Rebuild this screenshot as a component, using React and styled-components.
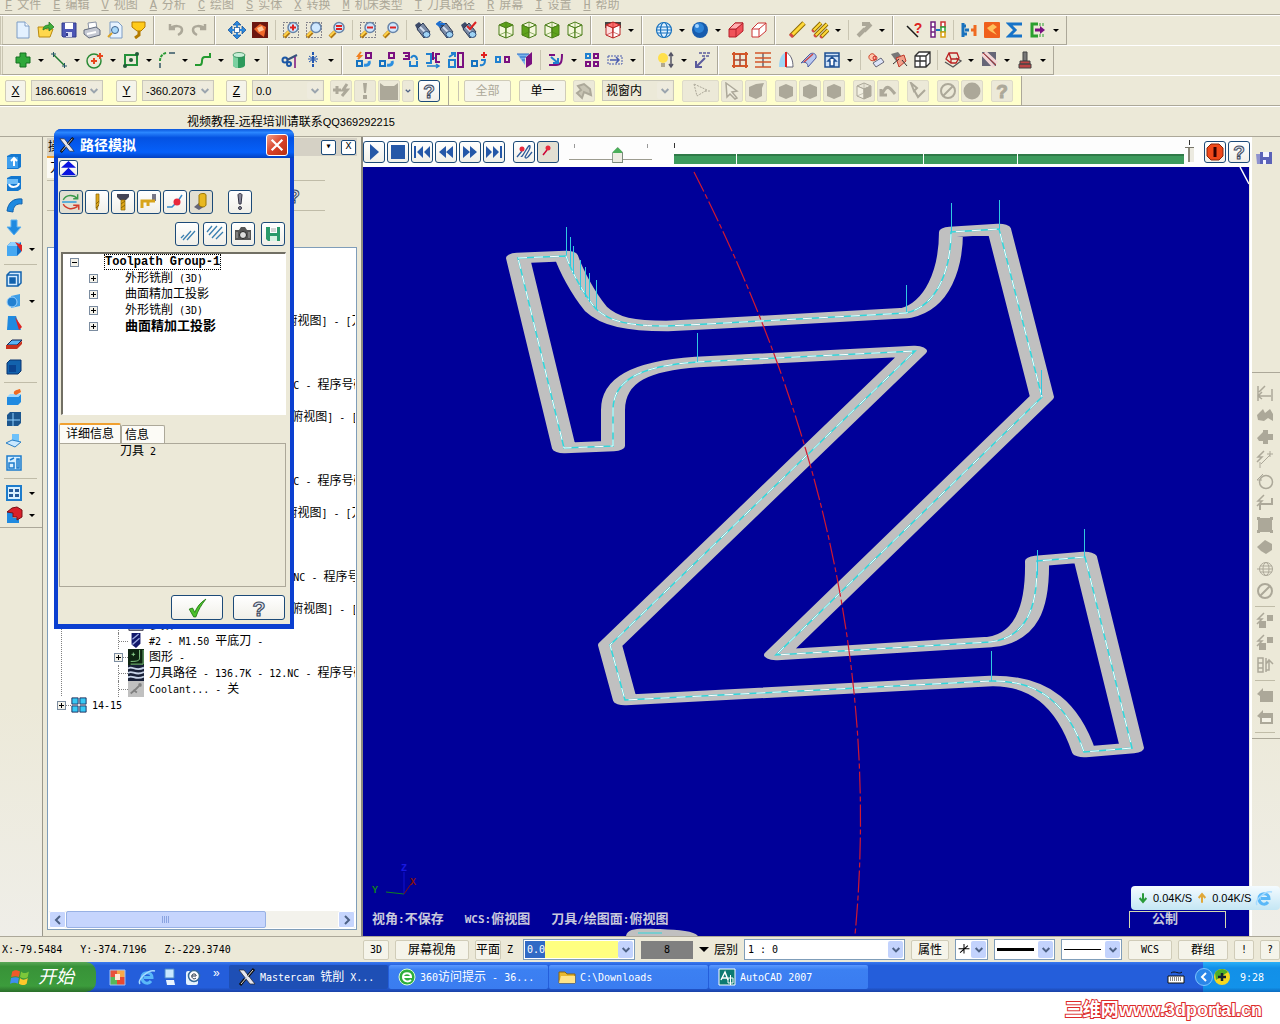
import React from "react";
import styled, {createGlobalStyle, css} from "styled-components";

const GlobalStyle = createGlobalStyle`
  * {
    box-sizing: border-box;
  }

  body {
    margin: 0;
    background: #fff;
    color: #000;
    font-family: "Liberation Sans", "Noto Sans CJK SC", sans-serif;
    font-size: 12px;
    line-height: 16px;
  }

  button, input, select {
    font: inherit;
    color: inherit;
    margin: 0;
    padding: 0;
    border-radius: 0;
    min-width: 0;
  }
`

const AXIS = "#1a1a1a";
const GREY = "#aca899";
const BLUE = "#1f8ae0";

/* ---------- icons, all on an 18 x 18 grid ---------- */

const cube = (top, left, right, line) => (
    <g stroke={line} strokeWidth="1" strokeLinejoin="round">
        <path d="M9 1 16 4 9 7 2 4Z" fill={top}/>
        <path d="M2 4 9 7V17L2 14Z" fill={left}/>
        <path d="M9 7 16 4V14L9 17Z" fill={right}/>
        <path d="M2 14 9 11 16 14M9 1V11" fill="none" strokeOpacity=".6"/>
    </g>
);

const lens = (color, sign, frame) => (
    <g>
        {frame && <rect x="1.5" y="1.5" width="15" height="15" fill="none" stroke="#224" strokeDasharray="1 2"/>}
        <path d="M2 16 7 11" stroke="#b07810" strokeWidth="4"/>
        <path d="M2 15 7 10" stroke="#ffd24a" strokeWidth="2"/>
        <circle cx="11" cy="6.500" r="5" fill="#cfe8ff" stroke="#6884a8" strokeWidth="1.500"/>
        <path d={sign} stroke={color} strokeWidth="2" fill="none"/>
    </g>
);

const scope = extra => (
    <g>
        <path d="M2 4 6 1 10 5 5 10Z" fill="#3c4a68"/>
        <path d="M4 8 10 2 17 11 11 17Z" fill="#7a8aa5" stroke="#2c3a55"/>
        <path d="M7 6 14 13" stroke="#d4e0f0" strokeWidth="2"/>
        <ellipse cx="13.500" cy="13.500" rx="3.500" ry="3" fill="#9fd3f5" stroke="#2c4a75"/>
        {extra}
    </g>
);

const magnet = extra => (
    <g>
        <path d="M2 10H7V15H2Z" fill="none" stroke="#1673c0" strokeWidth="2"/>
        <path d="M11 2H16V7H11Z" fill="none" stroke="#7a1080" strokeWidth="2"/>
        <path d="M9 14C13 15 15 13 14 10" fill="none" stroke="#2a8fe0" strokeWidth="3"/>
        {extra}
    </g>
);

const help = (fill, line) => (
    <text x="9" y="16" textAnchor="middle" fontSize="19" fontWeight="bold" fontFamily="Liberation Sans, sans-serif"
          fill={fill} stroke={line} strokeWidth="1">?</text>
);

const block = extra => (
    <g>
        <path d="M2 6 6 2H16V12L12 16H2Z" fill="#0f6cc4"/>
        <path d="M2 6H12V16H2Z" fill="#45a8f2"/>
        <path d="M2 6 6 2H16L12 6Z" fill="#8fd0ff"/>
        {extra}
    </g>
);

const greyBolt = <path d="M8 1 2 7H6L1 12" fill="none" stroke={GREY} strokeWidth="1.500"/>;
const ban = <g fill="none" stroke={GREY} strokeWidth="2"><circle cx="9" cy="9" r="7"/><path d="M4 14 14 4"/></g>;

const icons = {
    page: <g><path d="M3 1H11L15 5V17H3Z" fill="#e3f1ff" stroke="#7d9cc4"/><path d="M11 1V5H15" fill="#fff" stroke="#7d9cc4"/></g>,
    open: <g><path d="M1 6H7L9 8H16L13 16H2Z" fill="#ffd84d" stroke="#b98a10"/><path d="M6 9C6 5 9 4 12 4V1L17 6 12 10V7C9 7 8 8 6 9Z" fill="#3fae3a" stroke="#1b6e20" strokeWidth=".7"/></g>,
    save: <g><path d="M2 2H16V16H3L2 15Z" fill="#4d57b5" stroke="#333c8d"/><path d="M5 2H13V8H5Z" fill="#fff"/><path d="M6 11H12V16H6Z" fill="#d9dcf5"/><path d="M7 12V15" stroke="#333c8d" strokeWidth="2"/></g>,
    print: <g><path d="M5 2 13 1 14 8 6 9Z" fill="#fff" stroke="#8a93a5"/><path d="M1 9 13 6 17 9V14L6 17 1 13Z" fill="#c4c8d2" stroke="#626b7c"/><path d="M4 13 13 11" stroke="#fff" strokeWidth="2"/></g>,
    preview: <g><path d="M4 1H12L16 5V17H4Z" fill="#e7f3ff" stroke="#7d9cc4"/><circle cx="9" cy="9" r="3.500" fill="#a8d8fa" stroke="#41648d"/><path d="M6 12 2 16" stroke="#d9a326" strokeWidth="2"/></g>,
    cup: <g><path d="M3 1H16V6L12 10H8L3 6Z" fill="#ffcb1a" stroke="#b37b00"/><path d="M10 10V14L6 17" stroke="#b37b00" strokeWidth="3" fill="none"/></g>,
    undo: <path d="M3 8C7 4 15 4 15 9 15 12 13 13 11 14M3 3V8H8" fill="none" stroke={GREY} strokeWidth="2.500"/>,
    redo: <path d="M15 8C11 4 3 4 3 9 3 12 5 13 7 14M15 3V8H10" fill="none" stroke={GREY} strokeWidth="2.500"/>,
    fit: <g fill="#2b87dc" stroke="#124e95" strokeWidth=".7"><path d="M9 0 13 4H5ZM9 18 13 14H5ZM0 9 4 5V13ZM18 9 14 5V13Z"/><path d="M8 3H10V8H15V10H10V15H8V10H3V8H8Z" stroke="none"/><rect x="6.500" y="6.500" width="5" height="5" fill="#fff"/></g>,
    redraw: <g><rect x="1" y="1" width="16" height="16" fill="#6d1710"/><path d="M3 8 9 3 15 6 13 16 7 12Z" fill="#f0682a"/><path d="M6 7 11 5 13 9 8 11Z" fill="#ffc89b"/></g>,
    zoomWin: lens("#d22", "M8 6.500H14M11 3.500V9.500", true),
    zoomTarget: lens("none", "", true),
    zoomIn: lens("#d22", "M8 5H14M8 8H14", false),
    zoomOut: lens("#d22", "M8 6.500H14", true),
    zoomOut2: lens("#d22", "M8 6.500H14", false),
    scope: scope(null),
    scopeArrow: scope(<path d="M9 3H2M5 0 1 3 5 6" fill="none" stroke="#1d6fd0" strokeWidth="2"/>),
    scopeCheck: scope(<path d="M8 5 11 8 17 1" fill="none" stroke="#d22" strokeWidth="2"/>),
    cubeTop: cube("#5fa31c", "#f4f7dc", "#f4f7dc", "#4a7d18"),
    cubeFront: cube("#f4f7dc", "#5fa31c", "#f4f7dc", "#4a7d18"),
    cubeRight: cube("#f4f7dc", "#f4f7dc", "#5fa31c", "#4a7d18"),
    cubeIso: cube("#f4f7dc", "#f4f7dc", "#f4f7dc", "#4a7d18"),
    cubePlane: <g><path d="M1 1H17V7H1Z" fill="#444"/>{cube("#ff6f6f", "#ffdede", "#fff", "#b22")}</g>,
    globe: <g fill="none" stroke="#1771bd" strokeWidth="1.200"><circle cx="9" cy="9" r="7.500" fill="#dff1ff"/><ellipse cx="9" cy="9" rx="3.500" ry="7.500"/><path d="M2 6H16M1 9H17M2 12H16"/></g>,
    ball: <g><circle cx="9" cy="9" r="8" fill="#175cae"/><circle cx="8" cy="7" r="5" fill="#2c83d8"/><circle cx="6" cy="5" r="2" fill="#a6d5ff"/></g>,
    redBlock: <g stroke="#b5202a" strokeWidth="1"><path d="M2 8 8 2H16V10L9 16H2Z" fill="#f0525a"/><path d="M2 8H9V16M9 8 16 2" fill="none"/><path d="M2 8 8 2H16L9 8Z" fill="#ffaeb0"/></g>,
    wireBlock: <g stroke="#c33" fill="#fff"><path d="M2 8 8 2H16V10L9 16H2Z"/><path d="M2 8H9V16M9 8 16 2" fill="none"/></g>,
    eraser: <g><path d="M3 15 16 2" stroke="#8e6a00" strokeWidth="5"/><path d="M3 15 16 2" stroke="#ffd93a" strokeWidth="3"/><path d="M2 13 5 16" stroke="#d54747" strokeWidth="3"/></g>,
    erasers: <g><path d="M2 10 10 2M4 15 16 3M10 16 17 9" stroke="#8e6a00" strokeWidth="4"/><path d="M2 10 10 2M4 15 16 3M10 16 17 9" stroke="#ffd93a" strokeWidth="2"/><path d="M1 9 3 11M3 14 5 16M9 15 11 17" stroke="#d54747" strokeWidth="2"/></g>,
    eraserOff: <path d="M3 15 10 8M9 10 16 3M7 3H15" stroke={GREY} strokeWidth="4"/>,
    analyze: <g><path d="M1 5 12 16" stroke={AXIS} strokeWidth="1.500"/><text x="12" y="12" textAnchor="middle" fontSize="14" fontWeight="bold" fontFamily="Liberation Sans" fill="#d22">?</text></g>,
    chain: <g fill="#fff" strokeWidth="1.500"><path d="M2 1H6V6H2ZM2 6H6V11H2ZM2 11H6V16H2Z" stroke="#702080"/><path d="M12 1H16V6H12Z" stroke="#c33"/><path d="M12 6H16V11H12Z" stroke="#29a13a"/><path d="M12 11H16V16H12Z" stroke="#d8a010"/><path d="M7 9H11" stroke="#1771bd" strokeWidth="2"/></g>,
    merge: <g fill="none" strokeWidth="3"><path d="M3 2V16M3 5H6M3 13H7M5 9H9" stroke="#1771bd"/><path d="M15 4V15M11 9H15" stroke="#ef6a20"/></g>,
    orange: <g><rect x="1" y="1" width="16" height="16" rx="1" fill="#f0601c"/><path d="M4 7 10 3 14 6 10 9 14 14 7 10Z" fill="#ffc05c"/></g>,
    sigma: <path d="M16 3H3L9 9 3 15H16" fill="none" stroke="#1673c8" strokeWidth="3"/>,
    exportIcon: <g fill="none"><path d="M9 3H3V15H9" stroke="#2ba02f" strokeWidth="3"/><path d="M11 2V5M14 2V5M11 13V16M14 13V16" stroke="#2ba02f"/><path d="M6 9H12" stroke="#7a1080" strokeWidth="3"/><path d="M11 5 16 9 11 13Z" fill="#7a1080"/></g>,

    plus: <path d="M6 2H12V6H16V12H12V16H6V12H2V6H6Z" fill="#2fa83a" stroke="#157020"/>,
    line: <g stroke="#1f7a30" fill="none"><path d="M4 4 14 14" strokeWidth="1.500"/><path d="M1 3H6M3.500 1V6M12 15H17M14.500 12V17" stroke="#256"/></g>,
    circle: <g><circle cx="8" cy="10" r="7" fill="none" stroke="#2a8a35" strokeWidth="1.500"/><path d="M8 7V13M5 10H11M14 2V8M11 5H17" stroke="#e8451c" strokeWidth="2"/></g>,
    rect: <g><path d="M3 4H15V14H3Z" fill="none" stroke="#24913a" strokeWidth="2"/><g fill="#235a3a"><circle cx="15" cy="3" r="2"/><circle cx="3" cy="15" r="2"/><circle cx="9" cy="9" r="2"/></g></g>,
    fillet: <g fill="none"><path d="M2 17V12" stroke="#356" strokeWidth="1.500"/><path d="M2 10C2 5 5 2 9 2" stroke="#2a9a35" strokeWidth="2" strokeDasharray="3 1"/><path d="M11 2H17" stroke="#356" strokeWidth="1.500"/></g>,
    spline: <path d="M1 14H6C8 14 8 12 8 10 8 7 9 6 11 6H16V2" fill="none" stroke="#239a2f" strokeWidth="2"/>,
    cylinder: <g><path d="M3 4V14C3 18 15 18 15 14V4" fill="#2c9a5c"/><path d="M3 4V14C3 16 6 17 8 17V6" fill="#7bd0a0"/><ellipse cx="9" cy="4" rx="6" ry="2.500" fill="#c6efd6" stroke="#207a48" strokeWidth=".7"/></g>,
    trim: <g fill="none"><circle cx="4" cy="9" r="2.500" stroke="#1b57a5" strokeWidth="2"/><circle cx="8" cy="13" r="2" stroke="#1b57a5" strokeWidth="2"/><path d="M6 9 16 4" stroke="#37517c" strokeWidth="2"/><path d="M14 6V17" stroke="#7a1080" strokeWidth="1.500"/></g>,
    breakIcon: <g stroke="#2458b0" strokeWidth="2"><path d="M9 1V17" strokeDasharray="3 1"/><path d="M5 5 13 11M13 5 5 11M4 8H14" strokeWidth="1"/></g>,
    x1: magnet(<path d="M6 1 3 5H6L3 8" fill="none" stroke="#f08020" strokeWidth="2"/>),
    x2: magnet(null),
    x3: <g fill="none" strokeWidth="2"><path d="M2 2H8V8H2M8 5H4" stroke="#7a1080"/><path d="M9 10V15H16V10M10 7C12 3 16 5 16 9" stroke="#1f80d0"/></g>,
    x4: <g fill="none" strokeWidth="2"><path d="M2 3H7V12H2M11 7H8" stroke="#1f80d0"/><path d="M16 3H12V11H16M9 1V9" stroke="#7a1080"/><path d="M3 15H15M12 13 15 15 12 17" stroke="#1f80d0" strokeWidth="1.500"/></g>,
    x5: <g fill="none" strokeWidth="2"><path d="M2 9H8V16H2Z" stroke="#1f80d0"/><path d="M11 2H16V16H11Z" stroke="#7a1080"/><path d="M2 6 8 2M4 2H8V6" stroke="#1f80d0"/></g>,
    x6: <g fill="none" strokeWidth="2"><path d="M2 10H7V15H2Z" stroke="#1673c0"/><path d="M10 14C14 15 15 12 15 9H11" stroke="#1f80d0"/><path d="M14 1V7M11 4H17" stroke="#e02020"/></g>,
    x7: <g fill="none" strokeWidth="2"><path d="M3 6H7V11H3Z" stroke="#1f80d0"/><path d="M12 6H16V11H12Z" stroke="#7a1080"/></g>,
    x8: <g><path d="M10 6 16 1V13L10 17Z" fill="#7a1080"/><path d="M1 3H13L9 7V14Z" fill="#7ab4ec"/><path d="M1 3H13M4 6H10M6 9H9" stroke="#2a6cc8"/></g>,
    roll: <g fill="none" strokeWidth="2"><path d="M2 4H8M2 14H9C14 14 15 11 15 3" stroke="#7a1080"/><path d="M4 6 11 12M11 7V12H6" stroke="#1f80d0"/></g>,
    grid4: <g fill="none" stroke="#7a1080" strokeWidth="2"><path d="M3 3H7V7H3Z" stroke="#1f80d0"/><path d="M11 3H15V7H11ZM3 11H7V15H3ZM11 11H15V15H11Z"/></g>,
    stretch: <g fill="none" stroke="#4a5cb0"><path d="M2 5H16V13H2Z" strokeDasharray="2 1"/><path d="M4 9H13M10 6 13 9 10 12" strokeWidth="1.500"/></g>,
    bulb: <g><circle cx="6" cy="7" r="5" fill="#ffe04a"/><path d="M4 12H8V16H4Z" fill="#b0a890"/><path d="M14 3V15M12 5 14 2 16 5M12 13 14 16 16 13" stroke="#556" strokeWidth="1.500" fill="none"/></g>,
    level: <g fill="none" stroke="#5b5b9c" strokeWidth="1.500"><path d="M6 2H17M9 5H17" strokeDasharray="3 1"/><path d="M12 7 4 15M3 10V16H9" strokeWidth="2"/></g>,
    mesh: <g fill="none" stroke="#d2562a" strokeWidth="2"><path d="M3 1V17M15 1V17M1 3H17M1 15H17"/><path d="M9 3V15M3 9H15" stroke="#a04a3a" strokeWidth="1.500"/></g>,
    ladder: <g strokeWidth="1.500"><path d="M9 2V16" stroke="#667"/><path d="M1 2H17M1 7H17M1 11H17M1 16H17" stroke="#d2562a"/></g>,
    fan: <g><path d="M2 16C2 7 5 3 9 1V16Z" fill="#9fd6f4"/><path d="M9 1C14 4 16 9 16 16H9Z" fill="#fff" stroke="#667"/><path d="M9 1V16" stroke="#d22" strokeWidth="2"/></g>,
    tube: <g><path d="M1 12 10 3C13 1 17 3 16 7L8 16C8 12 5 10 1 12Z" fill="#b8c8f0" stroke="#4a5aa0"/><path d="M4 11 13 3" stroke="#c44" strokeWidth="1.500"/></g>,
    boxUp: <g fill="#cfe2f8" stroke="#1d4f92" strokeWidth="1.500"><path d="M2 2H16V16H2Z"/><path d="M2 5H16"/><path d="M9 6 13 10H11V15H7V10H5Z" fill="#fff"/></g>,
    blob1: <g><path d="M2 5C5 0 10 4 8 9 6 11 1 9 2 5Z" fill="#ffc8ad" stroke="#d0482e"/><path d="M6 12 14 7 17 11 9 16Z" fill="#dde4f8" stroke="#667"/><circle cx="8" cy="7" r="2" fill="none" stroke="#c22"/></g>,
    blob2: <g><path d="M1 3 8 1 12 6 6 10Z" fill="#777"/><path d="M6 7 14 4 16 10 9 16Z" fill="#f0a08a" stroke="#c0392b"/><path d="M3 13 9 8M12 9 17 15" stroke="#333"/></g>,
    wireCube: <g fill="none" stroke="#333" strokeWidth="1.300"><path d="M2 5 6 1H17V12L13 16H2ZM2 5H13V16M13 5 17 1M7 5V16M2 10H13" fill="#fff"/></g>,
    net1: <g fill="none" stroke="#b22" strokeWidth="1.300"><path d="M1 11 9 16 17 10 12 7" stroke="#555"/><path d="M2 8 5 2H13L15 7 12 12H7ZM5 2 7 8H15M7 8V12"/></g>,
    net2: <g><path d="M2 1H16V15H2Z" fill="#667"/><path d="M2 3 14 16M5 1 17 12" stroke="#f3d6d6" strokeWidth="3"/><path d="M3 2 16 14" stroke="#b33"/></g>,
    post: <g fill="#b44" stroke="#444"><path d="M7 1H11V10H7Z" fill="#777"/><path d="M4 10H14V13H4ZM3 13H15V17H3Z"/></g>,

    fastPoint: <path d="M1 8H9M5 4V12M15 2 11 8H15L10 14" fill="none" stroke={GREY} strokeWidth="3"/>,
    bang: <path d="M7 1H11L10 11H8ZM7 13H11V17H7Z" fill={GREY}/>,
    monster: <path d="M0 1 4 4H14L18 1V18H0Z" fill={GREY}/>,
    help: help("#dde3ec", "#3d4a5e"),
    helpOff: help(GREY, GREY),
    scribble: <path d="M3 4 9 2 15 7 16 13 9 10 7 16 2 11 6 8Z" fill="#c8c4b4" stroke={GREY} strokeWidth="2"/>,
    lasso: <path d="M2 2 5 14 15 8ZM13 9H18" fill="none" stroke={GREY} strokeDasharray="2 1"/>,
    cursor: <path d="M3 1 14 9 9 10 14 16 12 17 7 12 4 15Z" fill="#f0eee0" stroke={GREY} strokeWidth="1.500"/>,
    hexCheck: <path d="M2 5 9 2 17 1 15 6V14L9 17 2 14Z" fill={GREY}/>,
    hex: <path d="M2 5 9 2 16 5V14L9 17 2 14Z" fill={GREY}/>,
    cubeOff: cube("#e8e5d6", "#f2f0e2", GREY, GREY),
    arcOff: <path d="M2 13 6 7C9 3 12 7 16 12M2 7V13H8" fill="none" stroke={GREY} strokeWidth="3"/>,
    checkOff: <path d="M2 1 8 6 5 9ZM5 8 9 15 16 8" fill="none" stroke={GREY} strokeWidth="2"/>,
    ban,
    disc: <circle cx="9" cy="9" r="8.500" fill={GREY}/>,

    l1: <g><path d="M2 4 6 2H16V15L13 17H2Z" fill="#1478d0"/><path d="M2 5H13V16H2Z" fill="#3f9fee"/><path d="M9 6V14M6 9 9 6 12 9" fill="none" stroke="#fff" strokeWidth="2"/></g>,
    l2: <g><path d="M2 4 6 2H16V15L13 17H2Z" fill="#1478d0"/><path d="M2 5H13V10H2Z" fill="#6dbcf8"/><path d="M4 10C5 14 13 14 14 9" fill="none" stroke="#fff" strokeWidth="2"/></g>,
    l3: <path d="M2 15C3 7 8 2 17 3V8C11 7 8 11 8 16Z" fill={BLUE} stroke="#1262ad"/>,
    l4: <path d="M6 2H12V9H16L9 17 2 9H6Z" fill={BLUE} stroke="#5bb0f0"/>,
    l5: block(<path d="M10 2 17 5V12L14 8Z" fill="#d22"/>),
    l6: <g fill="none" stroke="#1262ad" strokeWidth="1.500"><path d="M2 5 5 2H16V13L13 16H2ZM2 5H13V16" fill="#d5ecff"/><path d="M5 8H10V13H5Z" fill="#1262ad"/></g>,
    l7: <g><path d="M6 4 15 2V14L6 16Z" fill="#3f9ee8"/><circle cx="7" cy="10" r="5" fill="#2380d0" stroke="#9cd2ff"/></g>,
    l8: <g><path d="M3 2H11L16 16H2Z" fill={BLUE}/><path d="M10 3 17 13 14 16Z" fill="#d22"/></g>,
    l9: <g><path d="M2 9 7 4H17L12 9Z" fill="#5ab4f5" stroke="#125"/><path d="M1 9H12L17 5V8L12 13H1Z" fill="#c8321e"/></g>,
    l10: <g><path d="M2 5 5 2H16V13L13 16H2Z" fill="#1262ad" stroke="#0a3570"/><path d="M4 7H11V14H4Z" fill="#0a4390"/></g>,
    l11: <g><path d="M2 9H13L16 6V14L13 17H2Z" fill={BLUE}/><path d="M2 9 5 6H16L13 9Z" fill="#9cd7ff"/><path d="M9 6C8 2 12 2 15 1L16 4 11 7Z" fill="#f06a20"/></g>,
    l12: <g><path d="M2 5 5 2H16V13L13 16H2Z" fill="#1c568e"/><path d="M2 10H15M8 3V16" stroke="#8fd0ff"/></g>,
    l13: <g><path d="M7 2H14V10L7 11Z" fill="#6dc1fa"/><path d="M1 11 7 8 16 10 10 15Z" fill="#c9e8ff" stroke="#2a7fc4"/></g>,
    l14: <g fill="#d8efff" stroke="#1d7ccc" strokeWidth="1.500"><path d="M2 2H16V16H2Z"/><path d="M4 9H9V14H4ZM12 5H14V14H12ZM5 6 9 4"/></g>,
    l15: <g><path d="M2 2H16V16H2Z" fill="#d8efff" stroke="#1d7ccc" strokeWidth="2"/><path d="M4 5H8V8H4ZM10 5H14V8H10ZM4 10H8V13H4ZM10 10H14V13H10Z" fill="#245a9a"/></g>,
    l16: <g><path d="M2 5H8V12H14V17H2Z" fill={BLUE}/><path d="M2 6 7 2 12 1 17 4V11L12 14V11L8 11V7Z" fill="#d8202a" stroke="#7a1015"/></g>,

    floppies: <g><path d="M1 5H8V15H2Z" fill="#8e92cf"/><path d="M5 3H17V15H5Z" fill="#5b62b8"/><path d="M8 3H14V8H8Z" fill="#f4f4ff"/><path d="M8 11H11V15H8Z" fill="#f4f4ff"/></g>,
    r1: <g fill="none" stroke={GREY} strokeWidth="1.500"><path d="M2 2V17M16 5V17M2 12H15M6 8 2 12 6 15M9 2 3 8"/></g>,
    r2: <path d="M1 9 7 3 9 7 14 3 17 8V15L12 12 8 15 2 14Z" fill={GREY}/>,
    r3: <path d="M1 10 7 4V2H12V6H17V12H12V16H7V13H3Z" fill={GREY}/>,
    r4: <g>{greyBolt}<path d="M5 14 14 5M14 1V7M11 4H17M4 12V18" stroke={GREY} fill="none"/></g>,
    r5: <g><circle cx="10" cy="10" r="6.500" fill="none" stroke={GREY} strokeWidth="1.500"/><path d="M7 2 1 8H6" fill="none" stroke={GREY}/></g>,
    r6: <g>{greyBolt}<path d="M4 16V10H16V4" stroke={GREY} fill="none" strokeWidth="2"/></g>,
    r7: <path d="M2 2H16V16H2ZM1 1H4V4H1ZM14 1H17V4H14ZM1 14H4V17H1ZM14 14H17V17H14Z" fill={GREY}/>,
    r8: <path d="M1 9 9 2 16 6V12L10 16 5 13Z" fill={GREY}/>,
    r9: <g fill="none" stroke={GREY}><circle cx="10" cy="9" r="6.500"/><ellipse cx="10" cy="9" rx="3" ry="6.500"/><path d="M1 9H17M4 6H16M4 12H16"/></g>,
    r11: <g>{greyBolt}<path d="M3 9H10V16H3ZM11 3H17V9H11Z" fill={GREY}/></g>,
    r13: <g fill="none" stroke={GREY} strokeWidth="1.500"><path d="M2 2H7V16H2ZM2 7H7M2 12H7M10 2V16M10 14H13V6M10 8 13 4 17 8"/></g>,
    r14: <path d="M1 8 7 2V5H17V16H4V10Z" fill={GREY}/>,
    r15: <g><path d="M1 8 7 2V5H17V16H4V10Z" fill={GREY}/><path d="M6 10H15V14H6Z" fill="#f4f2e6"/></g>,

    play: <path d="M5 1 14 9 5 17Z" fill="#2558a8"/>,
    stop: <path d="M2 2H16V16H2Z" fill="#2558a8"/>,
    first: <path d="M1 3H3V15H1ZM10 3V15L4 9ZM17 3V15L11 9Z" fill="#2558a8"/>,
    rewind: <path d="M9 3V15L2 9ZM16 3V15L9 9Z" fill="#2558a8"/>,
    forward: <path d="M2 3V15L9 9ZM9 3V15L16 9Z" fill="#2558a8"/>,
    last: <path d="M1 3V15L7 9ZM8 3V15L14 9ZM15 3H17V15H15Z" fill="#2558a8"/>,
    trace: <g fill="none"><path d="M2 14 7 8M6 13C7 15 10 8 13 4 15 1 16 3 14 7L10 14C11 17 14 13 17 9" stroke="#2c5a98" strokeWidth="1.300"/><circle cx="7" cy="6" r="2.500" fill="#e8283c"/></g>,
    run: <g><path d="M4 12 8 7" stroke="#c03" strokeWidth="1.500"/><circle cx="9" cy="5" r="2.500" fill="#e8283c"/></g>,
    halt: <g><path d="M5 1H13L17 5V13L13 17H5L1 13V5Z" fill="#f0481a" stroke="#8a2408"/><path d="M9 4V14" stroke="#300" strokeWidth="3"/></g>,

    dArrows: <g fill="none" strokeWidth="1.300"><path d="M2 7C5 2 11 2 15 6M15 2V6H11" stroke="#3a9a4a"/><path d="M1 9H14" stroke="#2a9ad8"/><path d="M2 11C5 16 11 16 15 13M11 12H16V16" stroke="#d23a2a"/></g>,
    dTool: <g><path d="M8 1H11V10L9 17 8 15Z" fill="#e0a81a" stroke="#8a6400" strokeWidth=".7"/><path d="M8 11 11 8M8 15 11 12" stroke="#8a6400"/></g>,
    dHolder: <g><path d="M3 1H15V4L12 7H6L3 4Z" fill="#445"/><path d="M7 7H11V17H7Z" fill="#e0a81a" stroke="#8a6400" strokeWidth=".7"/><path d="M7 11 11 8M7 15 11 12" stroke="#8a6400"/></g>,
    dPath: <g><path d="M12 1H16V8H12Z" fill="#778"/><path d="M2 15V8H15M8 8V13" fill="none" stroke="#d8a41a" strokeWidth="3"/></g>,
    dBall: <g><path d="M1 14H6L12 8 16 2" fill="none" stroke="#3a8ac8" strokeWidth="1.500"/><circle cx="11" cy="9" r="3.500" fill="#e8283c"/></g>,
    dStock: <g><path d="M2 14 8 9 13 13 7 17Z" fill="#667"/><path d="M7 2C8 0 14 0 14 2V12C13 15 8 14 7 12Z" fill="#e8b820" stroke="#9a7400"/></g>,
    dBang: <g fill="#889" stroke="#334"><path d="M7 2C7 0 11 0 11 2L10 11H8Z"/><circle cx="9" cy="15" r="1.500"/></g>,
    dLines2: <path d="M5 15 13 6M9 15 17 6M3 13 6 10" stroke="#3a7fb0" strokeWidth="1.300"/>,
    dLines4: <path d="M1 7 6 1M3 10 11 1M6 13 16 2M10 14 17 7" stroke="#3a7fb0" strokeWidth="1.300"/>,
    camera: <g><path d="M1 5H5L7 2H11L13 5H17V15H1Z" fill="#555"/><circle cx="9" cy="10" r="3.500" fill="#ddd" stroke="#222"/><path d="M3 7V13M15 7V13" stroke="#aaa"/></g>,
    greenSave: <g><path d="M2 2H16V16H4L2 14Z" fill="#2a9a6a"/><path d="M6 2H13V8H6Z" fill="#fff"/><path d="M6 11H13V16H6Z" fill="#d6f2e2"/><path d="M7 4H12M7 6H12" stroke="#aaa"/></g>,
    check: <path d="M2 10 5 9 7 13C9 8 12 4 17 1 13 6 10 11 8 17H6Z" fill="#4cc22c" stroke="#227a12" strokeWidth=".8"/>,
    up: <path d="M9 0 18 8H0ZM9 8 18 17H0Z" fill="#0a14e0"/>,
    mastercam: <g><path d="M1 2H6L17 16H12Z" fill="#e8e8f0" stroke="#222" strokeWidth=".7"/><path d="M16 1 10 8M7 11 2 17" stroke="#111" strokeWidth="3"/><path d="M15 2 3 16" stroke="#ddd"/></g>,

    bit: <g><path d="M4 0H14V12L9 17 4 13Z" fill="#12186a"/><path d="M5 7 12 1M5 13 13 6" stroke="#9aa8e0" strokeWidth="1.500"/></g>,
    param: <path d="M1 3H17V15H1Z" fill="#a8acc8" stroke="#334"/>,
    geometry: <g><path d="M0 0H18V18H0Z" fill="#0c2410"/><path d="M13 1V10C13 13 11 14 3 14M17 1V17H3" fill="none" stroke="#8fd890" strokeWidth="1"/><path d="M4 6H8M6 4V8" stroke="#8fd890"/></g>,
    waves: <g><path d="M0 0H18V18H0Z" fill="#182038"/><path d="M0 4C5 0 8 8 18 3M0 9C5 5 8 13 18 8M0 14C5 10 8 18 18 13" fill="none" stroke="#c8d4e8" strokeWidth="2"/></g>,
    coolant: <g><path d="M0 0H18V18H0Z" fill="#c0c0c0"/><path d="M3 14 9 9 15 3M6 10 10 13M12 3 15 6" stroke="#808080" strokeWidth="2"/></g>,
    group: <path d="M1 1H8V8H1ZM10 1H17V8H10ZM1 10H8V17H1ZM10 10H17V17H10Z" fill="#38c8f4" stroke="#125" strokeWidth="1"/>,

    windows: <g><path d="M2 4C5 2 7 3 9 4L8 9C6 8 4 8 1 9Z" fill="#ef5a2a"/><path d="M10 4C12 6 14 6 17 4L16 9C14 11 11 10 9 9Z" fill="#7cc83a"/><path d="M1 10C4 9 6 9 8 10L7 15C5 14 3 14 0 15Z" fill="#3f8ef0"/><path d="M9 10C11 12 13 12 16 10L15 15C13 17 10 16 8 15Z" fill="#fcc82a"/></g>,
    quick: <g><path d="M2 2H9V9H2Z" fill="#e8503a"/><path d="M9 2H17V9H9Z" fill="#f8a848"/><path d="M2 9H9V17H2Z" fill="#58b858"/><path d="M9 9H17V17H9Z" fill="#e84a30"/><path d="M7 6H12V12H7Z" fill="#ffe6d8"/><path d="M2 2H17V17H2Z" fill="none" stroke="#9cc0f8"/></g>,
    ie: <g fill="none"><path d="M13 13C10 17 4 15 4 9.500 4 3 14 3 14 9.500H6" stroke="#5ab8f8" strokeWidth="3"/><path d="M2 16C-1 12 10 1 17 3" stroke="#a8dcff" strokeWidth="1.500"/></g>,
    desk: <g><path d="M4 1H13V10H4Z" fill="#c8e8ff" stroke="#4a88c8"/><path d="M5 12H13L14 17H6Z" fill="#e8f4ff"/></g>,
    clockE: <g><rect x="2" y="3" width="12" height="14" rx="2" fill="#e4f2ff"/><circle cx="10" cy="8" r="5.500" fill="#fff" stroke="#356a9a" strokeWidth="1.500"/><path d="M12 10C10 12 7 10 8 7 9 5 13 6 12 8H8" stroke="#234" fill="none"/></g>,
    green360: <g><circle cx="9" cy="9" r="8" fill="#2fae3c" stroke="#d8ffd8"/><path d="M13 12C10 15 5 13 5 9 5 4 13 4 13 9H6" fill="none" stroke="#fff" strokeWidth="2"/></g>,
    folder: <g><path d="M1 4H7L9 6H17V15H1Z" fill="#e8b830" stroke="#8a6410"/><path d="M1 15 3 8H17V15Z" fill="#ffe48a"/></g>,
    acad: <g><path d="M1 1H17V17H1Z" fill="#0d7a72" stroke="#fff"/><path d="M3 12 7 4 10 12M4 10H9" stroke="#fff" strokeWidth="1.500" fill="none"/><path d="M10 10H15V15H10ZM12.500 7V17" stroke="#fff" fill="none"/></g>,
    keyboard: <g><path d="M1 8H17V15H1Z" fill="#fff" stroke="#111"/><path d="M3 10H15M3 12H15" stroke="#111" strokeDasharray="1 1"/><path d="M4 5C8 2 12 7 15 4" fill="none" stroke="#111"/></g>,
    shield: <g><circle cx="9" cy="9" r="8" fill="#f4d820"/><path d="M2 5A8 8 0 0 1 15 4L3 12Z" fill="#4cae28"/><path d="M9 5V13M5 9H13" stroke="#123" strokeWidth="2.500"/></g>,
    chevron: <g><circle cx="9" cy="9" r="8.500" fill="#2a86e8" stroke="#7ec4ff"/><path d="M11 5 7 9 11 13" fill="none" stroke="#fff" strokeWidth="2"/></g>,
    recv: <path d="M9 2V13M4 9 9 15 14 9" fill="none" stroke="#2a9a3a" strokeWidth="3"/>,
    send: <path d="M9 16V5M4 9 9 3 14 9" fill="none" stroke="#e0a83a" strokeWidth="3"/>,
    down: <path d="M4 6 9 11 14 6" fill="none" stroke="#4d6185" strokeWidth="3"/>,
    left: <path d="M12 3 6 9 12 15" fill="none" stroke="#4d6185" strokeWidth="3"/>,
    right: <path d="M6 3 12 9 6 15" fill="none" stroke="#4d6185" strokeWidth="3"/>,
    close: <path d="M3 3 15 15M15 3 3 15" stroke="#fff" strokeWidth="2.500"/>,
    star: <path d="M9 4V16M2 10H16M4 15 14 6" stroke="#000" strokeWidth="1.300"/>,
};

const Svg = styled.svg`
  display: block;
  flex: none;
  width: ${p => p.$size}px;
  height: ${p => p.$size}px;
`

const Icon = ({name, size = 18}) => (
    <Svg $size={size} viewBox="0 0 18 18" aria-hidden="true">{icons[name]}</Svg>
);

/* Latin runs are half the width of a Chinese character, as in a terminal font */
const Half = styled.span`
  font-family: "DejaVu Sans Mono", monospace;
  font-size: 10px;
  white-space: pre;
`

const Mixed = ({children}) => children.split(/([ -~]+)/).filter(Boolean).map((run, i) => (
    /^[ -~]/.test(run) ? <Half key={i}>{run}</Half> : <span key={i}>{run}</span>
));

/* ---------- data ---------- */

const menus = [["F", "文件"], ["E", "编辑"], ["V", "视图"], ["A", "分析"], ["C", "绘图"], ["S", "实体"], ["X", "转换"],
    ["M", "机床类型"], ["T", "刀具路径"], ["R", "屏幕"], ["I", "设置"], ["H", "帮助"]];

// "|" is a thin divider, "v" is a drop-down arrow
const fileBars = [
    "page open save print preview cup",
    "undo redo",
    "fit redraw | zoomWin zoomTarget zoomIn | zoomOut zoomOut2 | scope scopeArrow scopeCheck",
    "cubeTop cubeFront cubeRight cubeIso",
    "cubePlane v",
    "globe v ball v redBlock wireBlock",
    "eraser erasers v | eraserOff v",
    "analyze chain | merge orange sigma exportIcon v",
];

const sketchBars = [
    "plus v line v circle v rect v fillet v spline v cylinder v",
    "trim breakIcon v",
    "x1 x2 x3 x4 x5 x6 x7 x8 | roll v grid4 stretch v",
    "bulb v level",
    "mesh ladder fan tube boxUp v | blob1 blob2 wireCube | net1 v net2 v post v",
];

const leftBar = "l1 l2 l3 l4 l5+ | l6 l7+ l8 l9 l10 | l11 l12 l13 l14 | l15+ l16+";
const rightBar = "r1 r2 r3 r4 r5 r6 r7 r8 r9 ban | r11 r11 r13 | r14 r15 |";

const operation = (title, size) => [
    {depth: 3, icon: "folder", text: title, box: "-"},
    {depth: 4, icon: "param", text: "参数"},
    {depth: 4, icon: "bit", text: "#2 - M1.50 平底刀 -"},
    {depth: 4, icon: "geometry", text: "图形 -", box: "+"},
    {depth: 4, icon: "waves", text: `刀具路径 - ${size} - 12.NC - 程序号码 0`},
    {depth: 4, icon: "coolant", text: "Coolant... - 关"},
];

const tree = [
    {depth: 1, icon: "group", text: "Machine Group-1", box: "-"},
    {depth: 2, icon: "param", text: "属性 - Mill", box: "+"},
    {depth: 1, icon: "group", text: "Toolpath Group-1", box: "-"},
    {depth: 2, icon: "group", text: "12-13", box: "-"},
    ...operation("1 - 外形铣削 (3D) - [WCS: 俯视图] - [刀具面: 俯视图]", "135.1K"),
    ...operation("2 - 曲面精加工投影 - [WCS: 俯视图] - [刀具面: 俯视图]", "136.7K"),
    ...operation("3 - 外形铣削 (3D) - [WCS: 俯视图] - [刀具面: 俯视图]", "1135.1K"),
    ...operation("4 - 曲面精加工投影 - [WCS: 俯视图] - [刀具面: 俯视图]", "136.7K"),
    {depth: 1, icon: "group", text: "14-15", box: "+"},
];

/* ---------- toolbars ---------- */

const Page = styled.div`
  display: flex;
  flex-direction: column;
  min-height: 100vh;
  min-width: 1100px;
  overflow: hidden;
`

const Desktop = styled.div`
  position: relative;
  display: flex;
  flex-direction: column;
  background: #ece9d8;
`

const MenuBar = styled.nav`
  display: flex;
  align-items: flex-end;
  gap: 12px;
  height: 15px;
  padding: 0 5px;
  overflow: hidden;
  border-bottom: 1px solid #aca899;
  color: #aca899;

  a {
    color: inherit;
    text-decoration: none;
    white-space: nowrap;
  }

  u {
    font-family: "Liberation Mono", monospace;
    font-size: 12px;
    margin-right: 5px;
  }
`

const BarRow = styled.div`
  display: flex;
  height: 30px;
  border-top: 1px solid #fff;
`

const BarGroup = styled.div`
  display: flex;
  align-items: center;
  padding: 0 4px 0 ${p => p.$first ? 8 : 9}px;
  border-right: 1px solid #aca899;
  border-bottom: 1px solid #aca899;
  border-left: ${p => p.$first ? "3px double #c9c5b2" : "1px solid #fff"};
`

const FlatButton = styled.button`
  display: flex;
  align-items: center;
  justify-content: center;
  width: 23px;
  height: 22px;
  border: none;
  background: none;
`

const DropButton = styled(FlatButton)`
  width: 13px;

  &::after {
    content: "";
    border: ${p => p.$big ? 5 : 3}px solid transparent;
    border-top-color: #000;
    border-bottom: none;
  }
`

const ThinLine = styled.span`
  width: 1px;
  height: 20px;
  margin: 0 3px 0 4px;
  background: #c9c5b2;
`

const Bars = ({groups}) => (
    <BarRow>
        {groups.map((group, g) => (
            <BarGroup key={g} $first={g === 0}>
                {group.split(" ").map((item, i) => {
                    if (item === "|") return <ThinLine key={i}/>;
                    if (item === "v") return <DropButton key={i} aria-label="more"/>;
                    return <FlatButton key={i} aria-label={item}><Icon name={item}/></FlatButton>;
                })}
            </BarGroup>
        ))}
    </BarRow>
);

const CoordBar = styled.div`
  display: flex;
  height: 31px;
  border-top: 1px solid #fff;
  border-bottom: 1px solid #aca899;
`

const CoordGroup = styled.div`
  display: flex;
  align-items: center;
  gap: 2px;
  padding: 0 8px 0 5px;
  background: #ffffcc;
  border-right: 1px solid #aca899;
`

const SoftButton = styled.button`
  display: flex;
  flex: none;
  align-items: center;
  justify-content: center;
  width: ${p => p.$w || 22}px;
  height: 22px;
  margin-right: ${p => p.$after || 0}px;
  background: ${p => p.$off ? "#ece9d8" : "#f5f4ea"};
  border: 1px solid ${p => p.$off ? "#dedbc8" : "#d0ccb8"};
  border-radius: 2px;
  color: ${p => p.$dim ? GREY : "#000"};
  white-space: nowrap;
`

const Combo = styled.span`
  display: flex;
  flex: none;
  width: ${p => p.$w}px;
  height: 21px;
  padding: 1px;
  margin: 0 ${p => p.$after || 0}px 0 ${p => p.$before || 0}px;
  background: ${p => p.$bg || "#ece9d8"};
  border: 1px solid ${p => p.$line || "#c9c7ba"};
`

const ComboInput = styled.input`
  flex: 1;
  width: 20px;
  padding: 0 0 0 2px;
  border: none;
  background: transparent;
  font-size: 11px;
`

const ComboSelect = styled.select`
  flex: 1;
  appearance: none;
  padding: 0 2px;
  border: none;
  background: transparent;
  outline: none;
`

const ComboArrow = styled.button`
  display: flex;
  flex: none;
  align-items: center;
  justify-content: center;
  width: 15px;
  border: none;
  border-radius: 2px;
  background: ${p => p.$off ? "#f0eee4" : "#c3d3fd"};
  opacity: ${p => p.$off ? 0.5 : 1};
`

const Banner = styled.div`
  height: 31px;
  padding: 7px 0 0 187px;
  border-top: 1px solid #fff;
  border-bottom: 1px solid #aca899;
  white-space: nowrap;

  span {
    font-size: 11px;
  }
`

/* ---------- work area ---------- */

const Work = styled.main`
  display: flex;
  height: 799px;
`

const SideBar = styled.div`
  display: flex;
  flex: none;
  flex-direction: column;
  width: ${p => p.$right ? 30 : 43}px;
  padding-top: ${p => p.$right ? 10 : 0}px;
  background: linear-gradient(#ece9d8 70%, #efeee8);
  border-right: ${p => p.$right ? "none" : "1px solid #9a988c"};
  border-left: ${p => p.$right ? "2px solid #fff" : "none"};
`

const SideTools = styled.div`
  padding: ${p => p.$right ? "9px 0 2px 1px" : "13px 0 1px 2px"};
  margin-top: ${p => p.$right ? 203 : 0}px;
  border-bottom: 1px solid #aca899;
  border-top: ${p => p.$right ? "1px solid #aca899" : "none"};
`

const SideRow = styled.div`
  display: flex;
  height: 22px;
`

const SideLine = styled.hr`
  height: 1px;
  margin: 4px 5px 3px 2px;
  border: none;
  background: #c0bca8;
`

const SideItems = ({items}) => items.split(" ").map((item, i) => {
    if (item === "|") return <SideLine key={i}/>;
    const name = item.replace("+", "");
    return (
        <SideRow key={i}>
            <FlatButton aria-label={name}><Icon name={name}/></FlatButton>
            {item.endsWith("+") && <DropButton aria-label="more"/>}
        </SideRow>
    );
});

const Manager = styled.section`
  display: flex;
  flex: none;
  flex-direction: column;
  width: 320px;
  padding: 1px 4px 6px;
  border-right: 2px solid #8c8a80;
`

const ManagerHead = styled.header`
  display: flex;
  flex: none;
  align-items: center;
  height: 18px;
  padding: 0 1px;
  background: #d5d1c5;

  span {
    flex: 1;
  }
`

const TinyButton = styled.button`
  width: 15px;
  height: 15px;
  margin-left: 5px;
  background: #fff;
  border: 1px solid #1c4a78;
  border-radius: 2px;
  font-family: "Liberation Mono", monospace;
  font-size: 10px;
  line-height: 12px;
`

const ManagerTab = styled.div`
  flex: none;
  width: 70px;
  height: 22px;
  padding: 2px 3px;
  background: #fbfaf4;
  border-top: 2px solid #f0a030;
`

const ManagerTools = styled.div`
  display: flex;
  flex: none;
  align-items: center;
  justify-content: flex-end;
  height: 31px;
  margin: 2px 32px 36px 0;
  padding-right: 22px;
  border-top: 1px solid #c0bca8;
  border-bottom: 1px solid #c0bca8;
`

const TreeBox = styled.div`
  display: flex;
  flex: 1;
  flex-direction: column;
  min-height: 0;
  padding: 1px;
  background: #fff;
  border: 1px solid #7f9db9;
`

const TreeList = styled.ul`
  flex: 1;
  margin: 0;
  padding: 0;
  overflow: hidden;
  list-style: none;
`

const TreeRow = styled.li`
  display: flex;
  align-items: center;
  height: 16px;
  padding-left: ${p => [0, 8, 26, 45, 65][p.$depth]}px;
  white-space: nowrap;
  ${p => p.$depth > 1 && css`
    background: linear-gradient(#808080 50%, transparent 50%) 12px 0 / 1px 2px repeat-y;
  `}
`

const Twig = styled.span`
  display: flex;
  flex: none;
  align-items: center;
  width: 14px;
  height: 16px;
  ${p => p.$plain && css`
    border-left: 1px dotted #808080;
    width: 10px;
    margin-left: 4px;
  `}

  &::after {
    content: "";
    flex: 1;
    border-top: 1px dotted #808080;
  }
`

const Box = styled.button`
  flex: none;
  width: 9px;
  height: 9px;
  background:
    linear-gradient(#000, #000) center / 5px 1px no-repeat,
    linear-gradient(#000, #000) center / 1px ${p => p.$open ? 0 : 5}px no-repeat,
    #f4f2ea;
  border: 1px solid #7b8ca0;
`

const TreeLabel = styled.span`
  margin-left: 5px;
`

const Scroll = styled.div`
  display: flex;
  flex: none;
  height: 17px;
  background: #f3f2ec;
`

const ScrollButton = styled.button`
  display: flex;
  align-items: center;
  justify-content: center;
  width: 17px;
  background: #c6d5fd;
  border: 1px solid #fff;
  border-radius: 2px;
`

const ScrollThumb = styled.span`
  width: 200px;
  margin-right: auto;
  background: repeating-linear-gradient(90deg, #8ba4e0 0 1px, transparent 1px 2px) center / 8px 7px no-repeat, #c6d5fd;
  border: 1px solid #98b1e4;
  border-radius: 2px;
`

/* ---------- graphics window ---------- */

const View = styled.section`
  display: flex;
  flex: 1;
  flex-direction: column;
  min-width: 0;
`

const Player = styled.div`
  display: flex;
  flex: none;
  align-items: center;
  gap: 2px;
  height: 30px;
  background: #fdfdfd;
`

const BlueButton = styled.button`
  display: flex;
  flex: none;
  align-items: center;
  justify-content: center;
  width: ${p => p.$w || 22}px;
  height: ${p => p.$h || 22}px;
  margin-left: ${p => p.$before || 0}px;
  padding: 0;
  background: ${p => p.$down ? "#e2dfd2" : "linear-gradient(#fff, #f0efe8)"};
  border: 1px solid #1c4a78;
  border-radius: 3px;
`

const SpeedSlider = styled.input`
  appearance: none;
  flex: none;
  width: 83px;
  height: 22px;
  margin: 0 20px 0 8px;
  background:
    linear-gradient(#999, #999) 5px 3px / 1px 4px no-repeat,
    linear-gradient(#999, #999) 78px 3px / 1px 4px no-repeat,
    linear-gradient(#9d9c90, #9d9c90) 0 18px / 100% 1px no-repeat;

  &::-webkit-slider-thumb {
    appearance: none;
    width: 11px;
    height: 16px;
    margin-top: 6px;
    background: linear-gradient(#4cae5a 0 5px, #eeece2 5px);
    border: 1px solid #7a8a7c;
    clip-path: polygon(50% 0, 100% 35%, 100% 100%, 0 100%, 0 35%);
  }
`

const TimeSlider = styled.input`
  appearance: none;
  flex: 1;
  height: 26px;
  background:
    linear-gradient(#333, #333) 0 4px / 1px 5px no-repeat,
    linear-gradient(#fff, #fff) 12% 15px / 1px 10px no-repeat,
    linear-gradient(#fff, #fff) 48% 15px / 1px 10px no-repeat,
    linear-gradient(#fff, #fff) 66% 15px / 1px 10px no-repeat,
    linear-gradient(#2f7a48 0 2px, #3d9a5d 2px) 0 15px / calc(100% - 10px) 10px no-repeat;

  &::-webkit-slider-thumb {
    appearance: none;
    width: 9px;
    height: 24px;
    background:
      linear-gradient(#333, #333) 4px 0 / 1px 5px no-repeat,
      linear-gradient(90deg, #8c8a7c 0 2px, #eceae0 2px) 3px 8px / 6px 14px no-repeat,
      linear-gradient(#77756a, #77756a) 0 7px / 100% 1px no-repeat;
  }
`

const Canvas = styled.div`
  position: relative;
  flex: 1;
  min-height: 0;
  margin-right: 1px;
  overflow: hidden;
  background: #000099;

  > svg {
    display: block;
    width: 100%;
    height: 100%;
  }
`

const ViewInfo = styled.div`
  position: absolute;
  left: 9px;
  bottom: 8px;
  display: flex;
  gap: 21px;
  color: #c8c8dc;
  font-size: 13px;
  font-weight: bold;

  ${Half} {
    font-size: 11px;
  }
`

const ScaleBar = styled.div`
  position: absolute;
  right: 23px;
  bottom: 8px;
  width: 97px;
  height: 17px;
  border: 1px solid #d4d8b0;
  border-bottom: none;
  padding-left: 22px;
  color: #c8c8dc;
  font-size: 13px;
  font-weight: bold;
  line-height: 14px;
`

// The cutter looks wide and flat on screen, so outlines are drawn tall and then squashed
const FLAT = 0.44;
const outline = [
    ["M", 518, 258], ["L", 566, 256], ["C", 571, 270, 582, 292, 596, 309], ["C", 610, 322, 630, 326, 667, 326],
    ["L", 707, 324], ["L", 906, 313], ["C", 938, 306, 951, 268, 951, 232], ["L", 999, 229], ["L", 1042, 397],
    ["L", 776, 655], ["L", 990, 642], ["C", 1025, 638, 1038, 610, 1037, 561], ["L", 1085, 557], ["L", 1132, 748],
    ["L", 1084, 752], ["C", 1068, 705, 1040, 680, 991, 681], ["L", 625, 700], ["L", 610, 645], ["L", 915, 351],
    ["L", 697, 362], ["C", 640, 366, 613, 380, 613, 410], ["L", 613, 446], ["L", 564, 448], ["Z"],
];
const toPath = k => outline.map(([c, ...n]) => c + n.map((v, i) => i % 2 ? v / k : v).join(" ")).join("");

const plunges = [[566, 227, 255], [570, 237, 266], [573, 246, 274], [580, 260, 290], [585, 267, 297], [589, 273, 302],
    [596, 280, 309], [697, 333, 362], [906, 285, 312], [951, 203, 232], [999, 200, 229], [1041, 370, 395],
    [1037, 550, 575], [1084, 529, 557], [991, 651, 681]];

const Toolpath = () => (
    <svg viewBox="363 167 886 769" preserveAspectRatio="xMinYMin meet" role="img" aria-label="Toolpath">
        <path d={toPath(FLAT)} transform={`scale(1 ${FLAT})`} fill="none" stroke="#c0c0c0" strokeWidth="24"
              strokeLinejoin="round"/>
        <path d={toPath(1)} fill="none" stroke="#30d8dc" strokeWidth="1.500"/>
        <path d={toPath(1)} fill="none" stroke="#fff" strokeDasharray="9 7"/>
        {plunges.map(([x, y1, y2]) => <path key={x} d={`M${x}.5 ${y1}V${y2}`} stroke="#30c8e0"/>)}
        <path d="M694 172C800 380 883 640 855 935" fill="none" stroke="#d01830" strokeWidth="1.200"
              strokeDasharray="22 3 5 3"/>
        <path d="M1240 167 1249 184" stroke="#fff" strokeWidth="1.500"/>
        <path d="M626 936C628 927 640 929 660 929 680 930 694 931 698 936Z" fill="#c0c0c0"/>
        <path d="M638 933H662" stroke="#30d8dc"/>
        <g fill="none">
            <path d="M404 894 386 892" stroke="#108020"/>
            <path d="M404 894V872" stroke="#1010d0"/>
            <path d="M404 894 411 884" stroke="#801010"/>
        </g>
        <g fontFamily="Liberation Mono, monospace" fontSize="10" fontWeight="bold">
            <text x="401" y="871" fill="#1818e0">Z</text>
            <text x="410" y="885" fill="#801010">X</text>
            <text x="372" y="893" fill="#108020">Y</text>
        </g>
    </svg>
);

/* ---------- dialog ---------- */

const Dialog = styled.section`
  position: absolute;
  left: 54px;
  top: 129px;
  display: flex;
  flex-direction: column;
  width: 240px;
  height: 500px;
  padding: 0 4px 5px;
  background: #0b3fd0;
  border-radius: 7px 7px 0 0;
`

const DialogTitle = styled.header`
  display: flex;
  flex: none;
  align-items: center;
  gap: 5px;
  height: 29px;
  margin: 0 -4px;
  padding: 2px 6px 0 5px;
  border-radius: 7px 7px 0 0;
  background: linear-gradient(#0a56dc, #2a86ff 12%, #0452e2 30%, #0560fa 80%, #0340c0);
  color: #fff;
  font-size: 14px;
  font-weight: bold;

  h2 {
    flex: 1;
    margin: 0;
    font-size: inherit;
  }
`

const CloseButton = styled(BlueButton)`
  background: linear-gradient(135deg, #f0a088, #d8422a 50%, #b83010);
  border-color: #fff;
`

const DialogBody = styled.div`
  display: flex;
  flex: 1;
  flex-direction: column;
  min-height: 0;
  padding: 2px 1px 4px;
  background: #ece9d8;
`

const ButtonRow = styled.div`
  display: flex;
  flex: none;
  justify-content: ${p => p.$end ? "flex-end" : "flex-start"};
  gap: ${p => p.$gap || 2}px;
  padding: 0 ${p => p.$end ? 4 : 0}px 0 0;
  margin-bottom: ${p => p.$after || 0}px;
`

const PathTree = styled.ul`
  height: 163px;
  flex: none;
  margin: 0 3px 8px 2px;
  list-style: none;
  padding: 0;
  background: #fff;
  border: 1px solid #fff;
  border-top: 2px solid #716f64;
  border-left: 2px solid #716f64;
`

const PathRow = styled.li`
  display: flex;
  align-items: center;
  height: 16px;
  padding-left: ${p => p.$root ? 7 : 26}px;
  font-size: ${p => p.$bold ? 13 : 12}px;
  font-weight: ${p => p.$bold ? "bold" : "normal"};

  span {
    white-space: nowrap;
  }
`

const PathName = styled.span`
  margin-left: ${p => p.$root ? 26 : 27}px;
`

const RootName = styled(PathName)`
  font-family: "Liberation Mono", monospace;
  font-size: 12px;
  line-height: 14px;
  outline: 1px dotted #000;
`

const Tabs = styled.div`
  display: flex;
  flex: none;
  align-items: flex-end;
  height: 20px;
`

const Tab = styled.button`
  width: ${p => p.$on ? 62 : 44}px;
  height: ${p => p.$on ? 20 : 18}px;
  background: #fcfbf6;
  border: 1px solid #aca899;
  border-bottom: none;
  border-top: ${p => p.$on ? "2px solid #f0a030" : "1px solid #aca899"};
  border-radius: 2px 2px 0 0;
  line-height: 14px;
  text-align: ${p => p.$on ? "center" : "left"};
  padding: 0 3px;
`

const TabPage = styled.div`
  flex: 1;
  padding: 0 60px;
  margin: 0 3px 8px 0;
  border: 1px solid #aca899;
  line-height: 14px;
`

/* ---------- status bar, task bar ---------- */

const StatusBar = styled.div`
  display: flex;
  align-items: center;
  gap: 6px;
  height: 26px;
  padding-left: 2px;
  border-top: 1px solid #aca899;
  overflow: hidden;
  white-space: nowrap;
`

const Coords = styled.div`
  display: flex;
  gap: 18px;
  flex: none;
  width: 355px;
`

const StatusButton = styled(SoftButton)`
  height: 20px;
`

const ColorBox = styled.span`
  flex: none;
  width: 52px;
  height: 18px;
  background: #808080;
  text-align: center;
`

const ValueInput = styled(ComboInput)`
  font-family: "DejaVu Sans Mono", monospace;
  font-size: 10px;
`

const PlaneInput = styled(ValueInput)`
  background: linear-gradient(90deg, #316ac5 20px, #ffff80 20px);
  color: #fff;
`

const LineSample = styled.span`
  flex: 1;
  align-self: center;
  height: ${p => p.$h}px;
  margin: 0 4px 0 1px;
  background: #000;
`

const TaskBar = styled.footer`
  display: flex;
  height: 30px;
  background: linear-gradient(#3a7af0, #245edb 12%, #245edb 85%, #1941a5);
  color: #fff;
  white-space: nowrap;
`

const StartButton = styled.button`
  display: flex;
  flex: none;
  align-items: center;
  gap: 8px;
  width: 96px;
  padding-left: 10px;
  border: none;
  border-radius: 0 10px 10px 0;
  background: linear-gradient(#5aa858, #389238 15%, #3c9c3c 80%, #2a6e2a);
  color: #fff;
  font-size: 18px;
  font-style: italic;
`

const QuickBar = styled.div`
  display: flex;
  flex: none;
  align-items: center;
  gap: 5px;
  width: 133px;
  padding-left: 12px;

  a:first-child {
    margin-right: 7px;
  }

  span {
    margin: -8px 0 0 6px;
  }
`

const Task = styled.button`
  display: flex;
  flex: 0 1 159px;
  align-items: center;
  gap: 4px;
  margin: 3px 1px 3px 0;
  padding-left: 9px;
  border: none;
  border-radius: 2px;
  background: ${p => p.$on ? "#1e4fb5" : "linear-gradient(#5a98ff, #3c80f2 20%, #3a7cf0)"};
  color: #fff;
`

const Tray = styled.div`
  display: flex;
  align-items: center;
  width: 77px;
  background: linear-gradient(#2ab0f8, #1290e8 20%, #1292ea 85%, #0c6cc0);

  svg:first-child {
    margin-left: -8px;
  }

  time {
    margin-left: 9px;
  }
`

const Keyboard = styled.span`
  align-self: center;
  margin: 0 18px 0 auto;
`

const Speed = styled.div`
  position: absolute;
  right: 0;
  top: 886px;
  display: flex;
  align-items: center;
  gap: 4px;
  width: 149px;
  height: 24px;
  padding: 0 7px 0 6px;
  border-radius: 4px;
  background: linear-gradient(#f4fbff, #c4e6f4);
  font-size: 11px;
  white-space: nowrap;

  svg:last-child {
    margin-left: auto;
  }
`

const Below = styled.div`
  padding: 8px 18px 0 0;
  text-align: right;
`

const SiteLink = styled.a`
  color: #fff;
  font-size: 18px;
  font-weight: bold;
  line-height: 20px;
  text-decoration: none;
  -webkit-text-stroke: 2px #dc2a2a;
  paint-order: stroke fill;
`

const Arrow = () => <ComboArrow aria-label="open list"><Icon name="down" size={12}/></ComboArrow>;
const ArrowOff = () => <ComboArrow $off aria-label="open list"><Icon name="down" size={12}/></ComboArrow>;

const Coordinate = ({axis, value, after}) => (
    <>
        <SoftButton $w={21} $after={3} id={`axis-${axis}`}><u>{axis}</u></SoftButton>
        <Combo $w={72} $after={after}>
            <ComboInput defaultValue={value} aria-labelledby={`axis-${axis}`}/>
            <ArrowOff/>
        </Combo>
    </>
);

const App = () => (
    <Page>
        <GlobalStyle/>
        <Desktop>
            <MenuBar>
                {menus.map(([key, name]) => <a href="#menu" key={key}><u>{key}</u>{name}</a>)}
            </MenuBar>
            <Bars groups={fileBars}/>
            <Bars groups={sketchBars}/>
            <CoordBar>
                <CoordGroup>
                    <Coordinate axis="X" value="186.60619" after={11}/>
                    <Coordinate axis="Y" value="-360.2073" after={10}/>
                    <Coordinate axis="Z" value="0.0" after={4}/>
                    <SoftButton $off aria-label="fast point"><Icon name="fastPoint"/></SoftButton>
                    <SoftButton $off aria-label="relative"><Icon name="bang"/></SoftButton>
                    <SoftButton $off aria-label="snap"><Icon name="monster"/></SoftButton>
                    <SoftButton $off $w={12} $after={2} aria-label="snap list"><Icon name="down" size={8}/></SoftButton>
                    <BlueButton aria-label="help"><Icon name="help"/></BlueButton>
                </CoordGroup>
                <CoordGroup>
                    <ThinLine/>
                    <SoftButton $w={47} $after={6} $dim>全部</SoftButton>
                    <SoftButton $w={47} $after={5}>单一</SoftButton>
                    <SoftButton $off $after={5} aria-label="select"><Icon name="scribble"/></SoftButton>
                    <Combo $w={72} $after={6}>
                        <ComboSelect aria-label="选择方式"><option>视窗内</option></ComboSelect>
                        <ArrowOff/>
                    </Combo>
                    <SoftButton $off $w={37} aria-label="polygon"><Icon name="lasso"/></SoftButton>
                    <SoftButton $off aria-label="pick"><Icon name="cursor"/></SoftButton>
                    <SoftButton $off $after={6} aria-label="solid"><Icon name="hexCheck"/></SoftButton>
                    <SoftButton $off aria-label="edge"><Icon name="hex"/></SoftButton>
                    <SoftButton $off aria-label="face"><Icon name="hex"/></SoftButton>
                    <SoftButton $off $after={6} aria-label="body"><Icon name="hex"/></SoftButton>
                    <SoftButton $off aria-label="back"><Icon name="cubeOff"/></SoftButton>
                    <SoftButton $off $after={6} aria-label="last"><Icon name="arcOff"/></SoftButton>
                    <SoftButton $off $after={6} aria-label="verify"><Icon name="checkOff"/></SoftButton>
                    <SoftButton $off aria-label="clear"><Icon name="ban"/></SoftButton>
                    <SoftButton $off $after={6} aria-label="end"><Icon name="disc"/></SoftButton>
                    <SoftButton $off aria-label="selection help"><Icon name="helpOff"/></SoftButton>
                </CoordGroup>
            </CoordBar>
            <Banner>视频教程<span>-</span>远程培训请联系<span>QQ369292215</span></Banner>

            <Work>
                <SideBar>
                    <SideTools><SideItems items={leftBar}/></SideTools>
                </SideBar>

                <Manager>
                    <ManagerHead>
                        <span>操作管理</span>
                        <TinyButton aria-label="menu">▾</TinyButton>
                        <TinyButton aria-label="close">X</TinyButton>
                    </ManagerHead>
                    <ManagerTab>刀具路径</ManagerTab>
                    <ManagerTools><Icon name="help"/></ManagerTools>
                    <TreeBox>
                        <TreeList>
                            {tree.map((row, i) => (
                                <TreeRow key={i} $depth={row.depth}>
                                    <Twig $plain={!row.box}>
                                        {row.box && <Box $open={row.box === "-"} aria-label="toggle"/>}
                                    </Twig>
                                    <Icon name={row.icon} size={16}/>
                                    <TreeLabel><Mixed>{row.text}</Mixed></TreeLabel>
                                </TreeRow>
                            ))}
                        </TreeList>
                        <Scroll>
                            <ScrollButton aria-label="scroll left"><Icon name="left" size={12}/></ScrollButton>
                            <ScrollThumb/>
                            <ScrollButton aria-label="scroll right"><Icon name="right" size={12}/></ScrollButton>
                        </Scroll>
                    </TreeBox>
                </Manager>

                <View>
                    <Player>
                        {["play", "stop", "first", "rewind", "forward", "last"].map(name => (
                            <BlueButton key={name} aria-label={name}><Icon name={name}/></BlueButton>
                        ))}
                        <BlueButton $before={6} aria-label="trace"><Icon name="trace"/></BlueButton>
                        <BlueButton $down aria-label="run"><Icon name="run"/></BlueButton>
                        <SpeedSlider type="range" defaultValue="60" aria-label="speed"/>
                        <TimeSlider type="range" defaultValue="100" aria-label="position"/>
                        <BlueButton $before={8} aria-label="halt"><Icon name="halt"/></BlueButton>
                        <BlueButton aria-label="help"><Icon name="help"/></BlueButton>
                    </Player>
                    <Canvas>
                        <Toolpath/>
                        <ViewInfo>
                            <span><Mixed>视角:不保存</Mixed></span>
                            <span><Mixed>WCS:俯视图</Mixed></span>
                            <span><Mixed>刀具/绘图面:俯视图</Mixed></span>
                        </ViewInfo>
                        <ScaleBar>公制</ScaleBar>
                    </Canvas>
                </View>

                <SideBar $right>
                    <FlatButton aria-label="save all"><Icon name="floppies"/></FlatButton>
                    <SideTools $right><SideItems items={rightBar}/></SideTools>
                </SideBar>
            </Work>

            <StatusBar>
                <Coords>
                    <Half>X:-79.5484</Half>
                    <Half>Y:-374.7196</Half>
                    <Half>Z:-229.3740</Half>
                </Coords>
                <StatusButton $w={26}><Half>3D</Half></StatusButton>
                <StatusButton $w={74}>屏幕视角</StatusButton>
                <StatusButton $w={26}>平面</StatusButton>
                <Half as="label" htmlFor="depth">Z</Half>
                <Combo $w={112} $before={4} $bg="#fff" $line="#7f9db9">
                    <PlaneInput id="depth" defaultValue="0.0"/>
                    <Arrow/>
                </Combo>
                <ColorBox><Half>8</Half></ColorBox>
                <DropButton $big aria-label="colour"/>
                <label htmlFor="layer">层别</label>
                <Combo $w={161} $bg="#fff" $line="#7f9db9">
                    <ValueInput id="layer" defaultValue="1 : 0"/>
                    <Arrow/>
                </Combo>
                <StatusButton $w={38}>属性</StatusButton>
                <Combo $w={33} $bg="#fff" $line="#7f9db9"><Icon name="star" size={14}/><Arrow/></Combo>
                <Combo $w={61} $bg="#fff" $line="#7f9db9"><LineSample $h={3}/><Arrow/></Combo>
                <Combo $w={61} $bg="#fff" $line="#7f9db9"><LineSample $h={1}/><Arrow/></Combo>
                <StatusButton $w={44}><Half>WCS</Half></StatusButton>
                <StatusButton $w={50}>群组</StatusButton>
                <StatusButton $w={20}><Half>!</Half></StatusButton>
                <StatusButton $w={20}><Half>?</Half></StatusButton>
            </StatusBar>

            <TaskBar>
                <StartButton><Icon name="windows" size={20}/>开始</StartButton>
                <QuickBar>
                    <a href="#pictures" aria-label="pictures"><Icon name="quick"/></a>
                    <a href="#explorer" aria-label="explorer"><Icon name="ie"/></a>
                    <a href="#desktop" aria-label="desktop"><Icon name="desk"/></a>
                    <a href="#express" aria-label="express"><Icon name="clockE"/></a>
                    <span>»</span>
                </QuickBar>
                <Task $on><Icon name="mastercam"/><span><Mixed>Mastercam 铣削 X...</Mixed></span></Task>
                <Task><Icon name="green360"/><span><Mixed>360访问提示 - 36...</Mixed></span></Task>
                <Task><Icon name="folder"/><span><Mixed>C:\Downloads</Mixed></span></Task>
                <Task><Icon name="acad"/><span><Mixed>AutoCAD 2007</Mixed></span></Task>
                <Keyboard><Icon name="keyboard"/></Keyboard>
                <Tray>
                    <Icon name="chevron"/>
                    <Icon name="shield"/>
                    <time><Half>9:28</Half></time>
                </Tray>
            </TaskBar>

            <Dialog role="dialog" aria-labelledby="sim-title">
                <DialogTitle>
                    <Icon name="mastercam" size={16}/>
                    <h2 id="sim-title">路径模拟</h2>
                    <CloseButton aria-label="close"><Icon name="close" size={16}/></CloseButton>
                </DialogTitle>
                <DialogBody>
                    <ButtonRow $after={13}>
                        <BlueButton $w={19} $h={17} aria-label="collapse"><Icon name="up" size={15}/></BlueButton>
                    </ButtonRow>
                    <ButtonRow $after={8}>
                        <BlueButton $w={24} $h={24} $down aria-label="path"><Icon name="dArrows" size={20}/></BlueButton>
                        <BlueButton $w={24} $h={24} aria-label="tool"><Icon name="dTool"/></BlueButton>
                        <BlueButton $w={24} $h={24} aria-label="holder"><Icon name="dHolder"/></BlueButton>
                        <BlueButton $w={24} $h={24} aria-label="rapid"><Icon name="dPath"/></BlueButton>
                        <BlueButton $w={24} $h={24} aria-label="points"><Icon name="dBall"/></BlueButton>
                        <BlueButton $w={24} $h={24} $down aria-label="verify"><Icon name="dStock"/></BlueButton>
                        <BlueButton $w={24} $h={24} $before={13} aria-label="options"><Icon name="dBang"/></BlueButton>
                    </ButtonRow>
                    <ButtonRow $end $gap={4} $after={6}>
                        <BlueButton $w={24} $h={24} aria-label="few"><Icon name="dLines2"/></BlueButton>
                        <BlueButton $w={24} $h={24} aria-label="many"><Icon name="dLines4"/></BlueButton>
                        <BlueButton $w={24} $h={24} aria-label="snapshot"><Icon name="camera"/></BlueButton>
                        <BlueButton $w={24} $h={24} $before={2} aria-label="save"><Icon name="greenSave"/></BlueButton>
                    </ButtonRow>
                    <PathTree>
                        <PathRow $root $bold><Box $open aria-label="collapse"/><RootName $root>Toolpath Group-1</RootName></PathRow>
                        <PathRow><Box aria-label="expand"/><PathName><Mixed>外形铣削 (3D)</Mixed></PathName></PathRow>
                        <PathRow><Box aria-label="expand"/><PathName>曲面精加工投影</PathName></PathRow>
                        <PathRow><Box aria-label="expand"/><PathName><Mixed>外形铣削 (3D)</Mixed></PathName></PathRow>
                        <PathRow $bold><Box aria-label="expand"/><PathName>曲面精加工投影</PathName></PathRow>
                    </PathTree>
                    <Tabs>
                        <Tab $on>详细信息</Tab>
                        <Tab>信息</Tab>
                    </Tabs>
                    <TabPage><Mixed>刀具 2</Mixed></TabPage>
                    <ButtonRow $end $gap={10}>
                        <BlueButton $w={52} $h={25} aria-label="ok"><Icon name="check" size={20}/></BlueButton>
                        <BlueButton $w={52} $h={25} aria-label="help"><Icon name="help" size={20}/></BlueButton>
                    </ButtonRow>
                </DialogBody>
            </Dialog>

            <Speed>
                <Icon name="recv" size={12}/><span>0.04K/S</span>
                <Icon name="send" size={12}/><span>0.04K/S</span>
                <Icon name="ie"/>
            </Speed>
        </Desktop>
        <Below><SiteLink href="#site">三维网www.3dportal.cn</SiteLink></Below>
    </Page>
);

export default App;
